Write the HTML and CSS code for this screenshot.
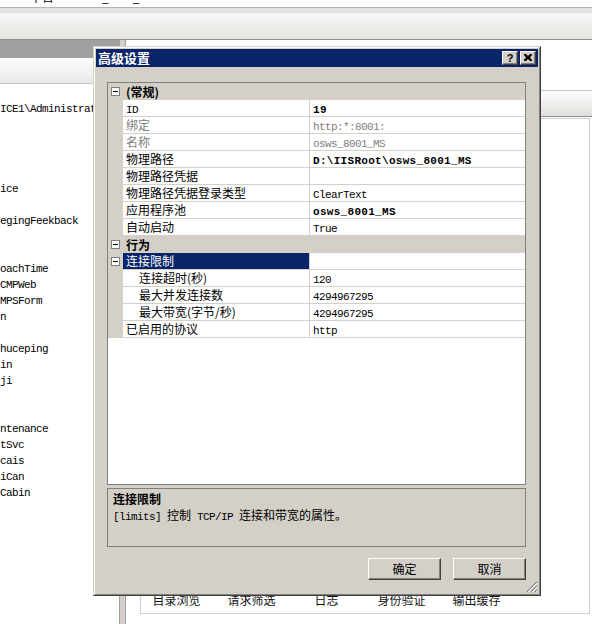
FILE: index.html
```html
<!DOCTYPE html>
<html lang="zh-CN">
<head>
<meta charset="utf-8">
<title>高级设置</title>
<link rel="stylesheet" href="styles.css">
</head>
<body>
<div class="menubar"><div class="menubar-in"><span class="mt1">平台</span><span class="mt2">_</span><span class="mt3">_</span></div></div>
<div class="toolbar"></div>
<div class="main">
  <div class="leftpane">
    <div class="lp-head"></div>
    <div class="lp-band"></div>
    <div class="tree m">
      <div class="tl">ICE1\Administrat</div>
      <div class="tl"></div><div class="tl"></div><div class="tl"></div><div class="tl"></div>
      <div class="tl">ice</div>
      <div class="tl"></div>
      <div class="tl">egingFeekback</div>
      <div class="tl"></div><div class="tl"></div>
      <div class="tl">oachTime</div>
      <div class="tl">CMPWeb</div>
      <div class="tl">MPSForm</div>
      <div class="tl">n</div>
      <div class="tl"></div>
      <div class="tl">huceping</div>
      <div class="tl">in</div>
      <div class="tl">ji</div>
      <div class="tl"></div><div class="tl"></div>
      <div class="tl">ntenance</div>
      <div class="tl">tSvc</div>
      <div class="tl">cais</div>
      <div class="tl">iCan</div>
      <div class="tl">Cabin</div>
    </div>
  </div>
  <div class="splitter"></div>
  <div class="rightpane">
    <div class="rp-top"></div>
    <div class="rp-tabs"></div>
    <div class="rp-box">
      <div class="features">
        <span class="feat">目录浏览</span>
        <span class="feat">请求筛选</span>
        <span class="feat">日志</span>
        <span class="feat">身份验证</span>
        <span class="feat">输出缓存</span>
      </div>
    </div>
  </div>
</div>

<div class="dialog">
  <div class="dlg-inner">
    <div class="titlebar">
      <span class="title">高级设置</span>
      <span class="cap help">?</span>
      <span class="cap close"><svg width="8" height="7" viewBox="0 0 8 7"><path d="M0 0h2l2 2 2-2h2v1L6 3.5 8 6v1H6L4 5 2 7H0V6l2-2.5L0 1z" fill="#000"/></svg></span>
    </div>
    <div class="dlg-body">
      <div class="pgrid">
        <div class="row cat"><div class="mg"><span class="tog"></span></div><div class="cattext">(常规)</div></div>
        <div class="row"><div class="mg"></div><div class="lab"><span class="m">ID</span></div><div class="val b"><span class="m">19</span></div></div>
        <div class="row dis"><div class="mg"></div><div class="lab">绑定</div><div class="val"><span class="m">http:*:8001:</span></div></div>
        <div class="row dis"><div class="mg"></div><div class="lab">名称</div><div class="val"><span class="m">osws_8001_MS</span></div></div>
        <div class="row"><div class="mg"></div><div class="lab">物理路径</div><div class="val b"><span class="m">D:\IISRoot\osws_8001_MS</span></div></div>
        <div class="row"><div class="mg"></div><div class="lab">物理路径凭据</div><div class="val"></div></div>
        <div class="row"><div class="mg"></div><div class="lab">物理路径凭据登录类型</div><div class="val"><span class="m">ClearText</span></div></div>
        <div class="row"><div class="mg"></div><div class="lab">应用程序池</div><div class="val b"><span class="m">osws_8001_MS</span></div></div>
        <div class="row"><div class="mg"></div><div class="lab">自动启动</div><div class="val"><span class="m">True</span></div></div>
        <div class="row cat"><div class="mg"><span class="tog"></span></div><div class="cattext">行为</div></div>
        <div class="row sel"><div class="mg"><span class="tog"></span></div><div class="lab">连接限制</div><div class="val"></div></div>
        <div class="row"><div class="mg"></div><div class="lab ind">连接超时(秒)</div><div class="val"><span class="m">120</span></div></div>
        <div class="row"><div class="mg"></div><div class="lab ind">最大并发连接数</div><div class="val"><span class="m">4294967295</span></div></div>
        <div class="row"><div class="mg"></div><div class="lab ind">最大带宽(字节/秒)</div><div class="val"><span class="m">4294967295</span></div></div>
        <div class="row"><div class="mg"></div><div class="lab">已启用的协议</div><div class="val"><span class="m">http</span></div></div>
      </div>
      <div class="desc">
        <div class="desc-title">连接限制</div>
        <div class="desc-text"><span class="m">[limits] </span>控制<span class="m"> TCP/IP </span>连接和带宽的属性。</div>
      </div>
      <div class="btns">
        <button class="btn">确定</button>
        <button class="btn">取消</button>
      </div>
    </div>
    <svg class="grip" width="12" height="12" viewBox="0 0 12 12">
      <path d="M11 1L1 11M11 5L5 11M11 9L9 11" stroke="#808080" stroke-width="1.2"/>
      <path d="M11 2L2 11M11 6L6 11M11 10L10 11" stroke="#ffffff" stroke-width="1"/>
    </svg>
  </div>
</div>
</body>
</html>
```

FILE: styles.css
```css
* { box-sizing: border-box; }
html, body { margin: 0; padding: 0; }
body {
  width: 592px;
  height: 624px;
  overflow: hidden;
  position: relative;
  background: #fff;
  font-family: "Noto Sans CJK SC", sans-serif;
  font-size: 12px;
  color: #000;
}
.m {
  font-family: "Liberation Mono", "Noto Sans CJK SC", monospace;
  font-size: 11px;
  letter-spacing: -0.6px;
}

/* background application */
.menubar { height: 7px; overflow: hidden; background: #fff; }
.menubar-in { display: flex; margin-top: -10px; line-height: 13px; font-size: 12px; }
.mt1 { margin-left: 30px; }
.mt2 { margin-left: 48px; }
.mt3 { margin-left: 24px; }

.toolbar {
  height: 33px;
  border-top: 1px solid #b4b4b4;
  border-bottom: 1px solid #8e8e8e;
  background: linear-gradient(#e2e2e2 0, #e2e2e2 5px, #f8f8f8 6px, #e6e4e0 100%);
}

.main { display: flex; height: 584px; }
.leftpane {
  width: 120px;
  border-right: 1px solid #a0a0a0;
  display: flex;
  flex-direction: column;
  overflow: hidden;
}
.lp-head { height: 18px; background: #a0a0a0; flex: none; }
.lp-band {
  height: 26px;
  flex: none;
  background: linear-gradient(#fdfdfd, #e8e8e8);
  border-bottom: 1px solid #c8c8c8;
}
.tree { padding-top: 17px; }
.tl { height: 16px; line-height: 16px; white-space: nowrap; }

.splitter { width: 5px; background: #d4d0c8; flex: none; }
.rightpane {
  flex: 1;
  border-left: 1px solid #a0a0a0;
  display: flex;
  flex-direction: column;
}
.rp-top { height: 50px; flex: none; }
.rp-tabs {
  height: 27px;
  flex: none;
  border-top: 1px solid #c8c8c8;
  border-bottom: 1px solid #8c8c8c;
  background: linear-gradient(#fcfcfc, #e2e0dc);
}
.rp-box {
  flex: 1;
  margin: 1px 2px 10px 14px;
  border: 1px solid #d0d0d0;
  display: flex;
  flex-direction: column;
  justify-content: flex-end;
}
.features { display: flex; margin-left: -2px; padding-bottom: 5px; }
.feat { width: 75px; text-align: center; line-height: 16px; color: #111; }

/* dialog */
.dialog {
  position: absolute;
  left: 93px;
  top: 46px;
  width: 448px;
  height: 550px;
  background: #d4d0c8;
  border: 1px solid;
  border-color: #d4d0c8 #404040 #404040 #d4d0c8;
}
.dlg-inner {
  position: relative;
  height: 100%;
  border: 1px solid;
  border-color: #fff #808080 #808080 #fff;
  padding: 1px;
  display: flex;
  flex-direction: column;
}
.titlebar {
  height: 18px;
  flex: none;
  background: #0a246a;
  display: flex;
  align-items: center;
  padding: 0 2px 0 2px;
}
.title {
  flex: 1;
  color: #fff;
  font-weight: bold;
  font-size: 13px;
  line-height: 18px;
}
.cap {
  width: 16px;
  height: 14px;
  background: #d4d0c8;
  border: 1px solid;
  border-color: #fff #404040 #404040 #fff;
  box-shadow: inset -1px -1px 0 #808080;
  display: flex;
  align-items: center;
  justify-content: center;
}
.help {
  margin-right: 2px;
  font-family: "Liberation Sans", sans-serif;
  font-weight: bold;
  font-size: 11px;
  line-height: 12px;
  padding-bottom: 1px;
}
.close svg { display: block; margin-top: -1px; }

.dlg-body {
  flex: 1;
  display: flex;
  flex-direction: column;
  padding: 15px 12px 0 11px;
}
.pgrid {
  height: 403px;
  flex: none;
  border: 1px solid #808080;
  background: #fff;
}
.row {
  display: grid;
  grid-template-columns: 15px 187px 1fr;
  height: 17px;
}
.mg {
  background: #d4d0c8;
  display: flex;
  align-items: center;
  padding-left: 3px;
}
.tog {
  width: 9px;
  height: 9px;
  border: 1px solid #808080;
  background: #fff;
  display: flex;
  align-items: center;
  justify-content: center;
}
.tog::before { content: ""; width: 5px; height: 1px; background: #000; }
.lab {
  border-bottom: 1px solid #d4d0c8;
  border-right: 1px solid #d4d0c8;
  padding-left: 3px;
  line-height: 16px;
  white-space: nowrap;
  overflow: hidden;
}
.lab.ind { padding-left: 16px; }
.val {
  border-bottom: 1px solid #d4d0c8;
  padding-left: 3px;
  line-height: 16px;
  white-space: nowrap;
  overflow: hidden;
}
.val.b .m { font-weight: bold; letter-spacing: 0.3px; }
.dis { color: #808080; }
.cat { background: #d4d0c8; }
.cattext {
  grid-column: 2 / 4;
  font-weight: bold;
  padding-left: 3px;
  line-height: 17px;
}
.sel .lab { background: #0a246a; color: #fff; }

.desc {
  margin-top: 3px;
  height: 59px;
  flex: none;
  border: 1px solid #808080;
  padding: 2px 0 0 5px;
  line-height: 16px;
}
.desc-title { font-weight: bold; }

.btns {
  margin-top: 11px;
  display: flex;
  justify-content: flex-end;
  gap: 12px;
}
.btn {
  width: 73px;
  height: 22px;
  padding: 0;
  background: #d4d0c8;
  border: 1px solid;
  border-color: #fff #404040 #404040 #fff;
  box-shadow: inset -1px -1px 0 #808080;
  font-family: "Noto Sans CJK SC", sans-serif;
  font-size: 12px;
  color: #000;
  line-height: 18px;
}
.grip { position: absolute; right: 1px; bottom: 1px; }
```
